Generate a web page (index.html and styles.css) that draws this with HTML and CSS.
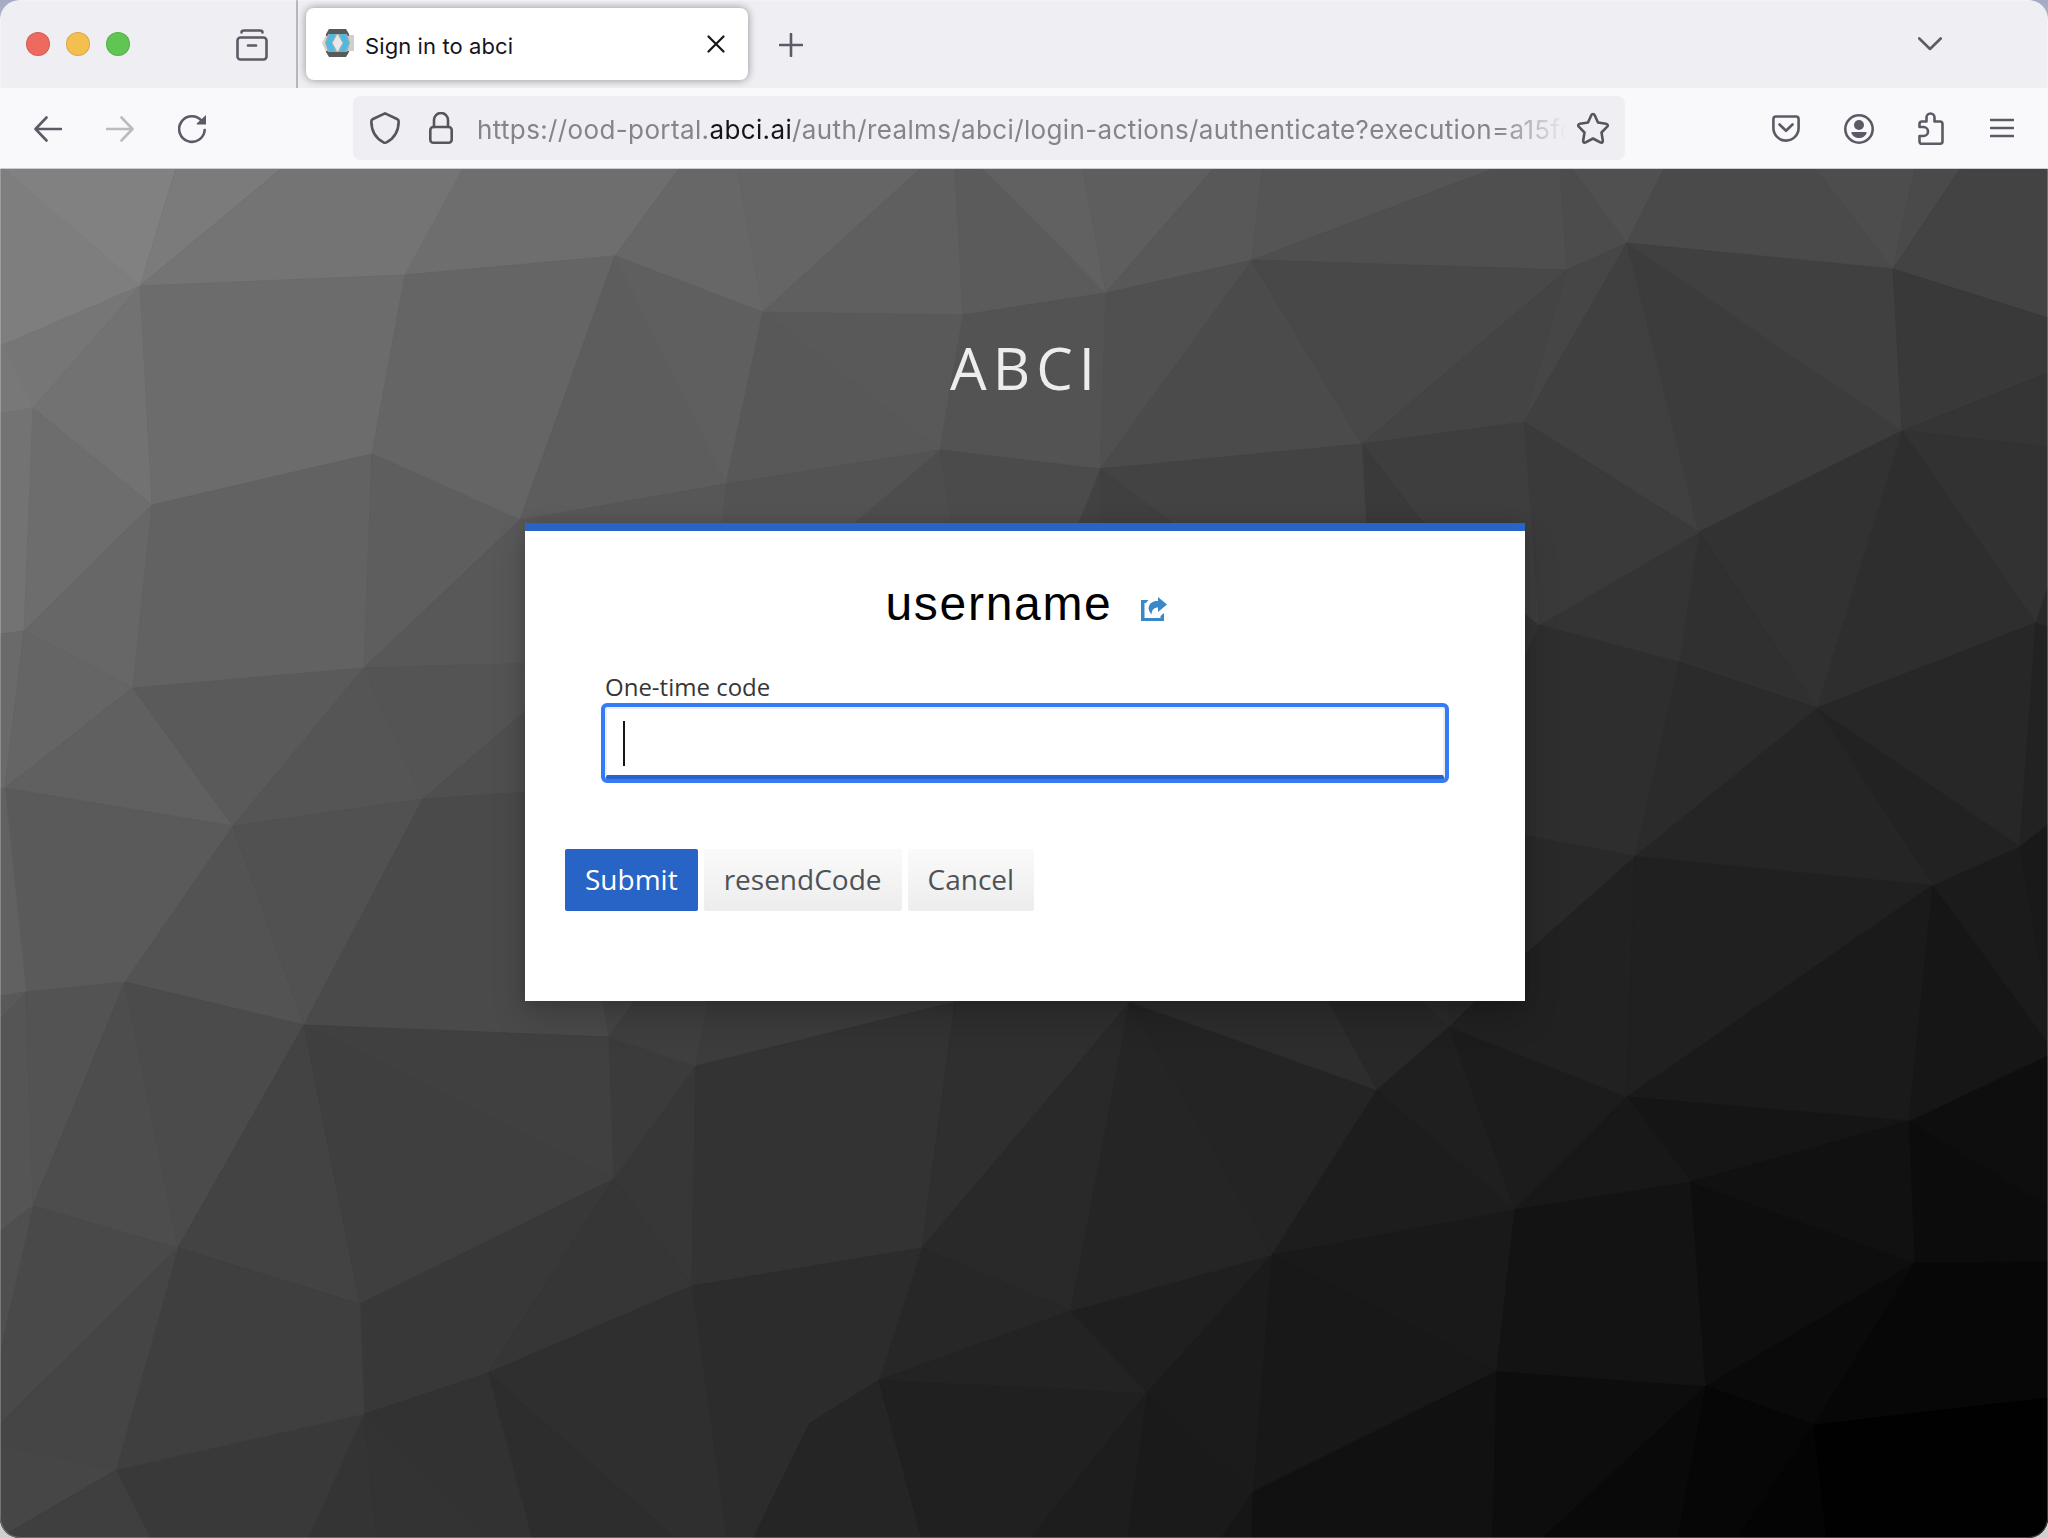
FILE: index.html
```html
<!DOCTYPE html>
<html lang="en">
<head>
<meta charset="utf-8">
<title>Sign in to abci</title>
<link rel="stylesheet" href="styles.css">
</head>
<body>
<div class="window">
  <header class="tabbar">
    <div class="lights"><span class="light red"></span><span class="light yellow"></span><span class="light green"></span></div>
    <svg class="icon view-icon" width="32" height="32" viewBox="0 0 32 32"><path d="M5.5 3.5C5.5 2 6.500 1.500 8 1.500H24C25.500 1.500 26.500 2 26.500 3.500"/><rect x="1.500" y="8.500" width="29" height="22" rx="3"/><path d="M12 16.500h8"/></svg>
    <div class="tab">
      <svg class="favicon" width="32" height="30" viewBox="0 0 32 30"><path d="M24 6h8v16h-8z" fill="#cfcfcf"/><path d="M0 14l4-8h5v17H4z" fill="#d2d4d5"/><path d="M7 0h17l3 5v2H4V5zM4 22h23v1l-3 5H7l-3-5z" fill="#595959"/><path d="M6 5h19l3 9-3 9H6l-3-9z" fill="#a3a9ab"/><path d="M15.500 5l5 9-5 9-5-9z" fill="#e6e8e9"/><path d="M8 5h5.500L9.500 14l4 9H8l-4-9z" fill="#4bbbe6"/><path d="M17.500 5H23l4 9-4 9h-5.500l4-9z" fill="#4bbbe6"/></svg>
      <span class="tab-title">Sign in to abci</span>
      <svg class="icon close" width="18" height="18" viewBox="0 0 18 18"><path d="M1.500 1.500l15 15M16.500 1.500l-15 15"/></svg>
    </div>
    <svg class="icon plus" width="24" height="24" viewBox="0 0 24 24"><path d="M12 1v22M1 12h22"/></svg>
    <svg class="icon chevron" width="24" height="14" viewBox="0 0 24 14"><path d="M1.300 1.500L12 12 22.700 1.500"/></svg>
  </header>
  <nav class="toolbar">
    <svg class="icon low" width="28" height="26" viewBox="0 0 28 26"><path d="M27 13H2M12.500 1.500L1.500 13l11 11.500"/></svg>
    <svg class="icon forward low" width="28" height="26" viewBox="0 0 28 26"><path d="M1 13h25M15.500 1.500L26.500 13l-11 11.500"/></svg>
    <svg class="icon reload low" width="28" height="30" viewBox="0 0 28 30"><path d="M23.500 6.500A12.800 12.800 0 1 0 26.700 16"/><path class="solid" d="M28 1v9.500h-8.500c-1 0-1-.8-.5-1.300z"/></svg>
    <div class="urlbar">
      <svg class="icon dark" width="30" height="32" viewBox="0 0 30 32"><path d="M15 1.300L27 7c1 .5 1.700 1.200 1.700 2.500C28.500 19 25 26 16.500 30.300q-1.500.8-3 0C5 26 1.500 19 1.300 9.500 1.300 8.200 2 7.500 3 7z"/></svg>
      <svg class="icon dark lock" width="24" height="32" viewBox="0 0 24 32"><path d="M5 15V8a7 7 0 0 1 14 0v7"/><rect x="1.300" y="15" width="21.400" height="15.700" rx="3"/></svg>
      <div class="url">https://ood-portal.<b>abci.ai</b>/auth/realms/abci/login-actions/authenticate?execution=a15fc</div>
      <svg class="icon dark" width="32" height="32" viewBox="0 0 32 32"><path d="M16 2c.8 0 1.300.4 1.600 1l3.400 7.500 8 1.200c1.800.3 2.300 1.800 1.200 3l-5.700 5.800 1.300 8c.2 1.700-1 2.600-2.500 1.900L16 26.500 8.700 30.400c-1.500.7-2.700-.2-2.500-1.900l1.300-8-5.700-5.800c-1.100-1.200-.6-2.700 1.200-3l8-1.200L14.400 3c.3-.6.8-1 1.600-1z"/></svg>
    </div>
    <div class="actions">
      <svg class="icon" width="28" height="27" viewBox="0 0 28 27"><path d="M4 1.500h20q2.600 0 2.600 2.700V13a12.600 12.600 0 0 1-25.200 0V4.200Q1.400 1.500 4 1.500zM7.500 9.500l6.500 6.300 6.500-6.300"/></svg>
      <svg class="icon low" width="30" height="30" viewBox="0 0 30 30"><circle cx="15" cy="15" r="13.700"/><circle class="solid" cx="15" cy="11" r="5"/><path class="solid" d="M8.500 18h13q1.500 0 1 1.300C21 23 18 24 15 24s-6-1-7.500-4.700Q7 18 8.500 18z"/></svg>
      <svg class="icon puzzle" width="26" height="33" viewBox="0 0 26 33"><path d="M4 9.500h4.500V5.500a4 4 0 0 1 8 0v4H22q2.500 0 2.500 2.500v17.500q0 2.200-2.500 2.200H4q-2.500 0-2.500-2.200V24h4a4.500 4.500 0 0 0 0-9H1.500v-3Q1.500 9.500 4 9.500z"/></svg>
      <svg class="icon" width="24" height="20" viewBox="0 0 24 20"><path d="M1 2h22M1 10h22M1 18h22"/></svg>
    </div>
  </nav>
  <main class="page">
    <svg class="facets" width="2048" height="1369" viewBox="0 168 2048 1369" aria-hidden="true">
      <g>
      <polygon color="#7e7e7e" points="0,160 5,169 140,285 3,344 0,344"/>
      <polygon color="#818181" points="0,160 178,160 140,285 5,169"/>
      <polygon color="#7b7b7b" points="176,168 281,168 140,285"/>
      <polygon color="#747474" points="281,168 463,168 405,274 140,285"/>
      <polygon color="#6e6e6e" points="463,168 679,168 615,255 405,274"/>
      <polygon color="#676767" points="679,168 738,168 763,311 615,255"/>
      <polygon color="#656565" points="738,168 920,168 763,311"/>
      <polygon color="#5f5f5f" points="920,168 955,168 963,314 763,311"/>
      <polygon color="#5b5b5b" points="955,168 983,168 1106,292 963,314"/>
      <polygon color="#616161" points="983,168 1083,168 1106,292"/>
      <polygon color="#5e5e5e" points="1083,168 1213,168 1106,292"/>
      <polygon color="#585858" points="1213,168 1262,168 1252,259 1106,292"/>
      <polygon color="#555555" points="1262,168 1493,168 1252,259"/>
      <polygon color="#4f4f4f" points="1493,168 1560,168 1567,269 1252,259"/>
      <polygon color="#4c4c4c" points="1560,168 1573,168 1627,242 1567,269"/>
      <polygon color="#505050" points="1573,168 1664,168 1627,242"/>
      <polygon color="#4a4a4a" points="1664,168 1816,168 1893,268 1627,242"/>
      <polygon color="#4d4d4d" points="1816,168 1915,168 1893,268"/>
      <polygon color="#4a4a4a" points="1915,168 1960,168 1893,268"/>
      <polygon color="#434343" points="1960,168 2048,168 2048,317 1893,268"/>
      </g>
      <g>
      <polygon color="#767676" points="3,344 140,285 33,407"/>
      <polygon color="#787878" points="0,344 3,344 33,407 0,413"/>
      <polygon color="#727272" points="140,285 152,504 33,407"/>
      <polygon color="#6c6c6c" points="140,285 405,274 372,453 152,504"/>
      <polygon color="#656565" points="405,274 615,255 520,519 372,453"/>
      <polygon color="#5d5d5d" points="615,255 726,483 520,519"/>
      <polygon color="#5f5f5f" points="615,255 763,311 726,483"/>
      <polygon color="#585858" points="763,311 940,449 726,483"/>
      <polygon color="#595959" points="763,311 963,314 940,449"/>
      <polygon color="#535353" points="963,314 1106,292 1100,468 940,449"/>
      <polygon color="#505050" points="1106,292 1252,259 1100,468"/>
      <polygon color="#4b4b4b" points="1252,259 1362,443 1100,468"/>
      <polygon color="#484848" points="1252,259 1567,269 1362,443"/>
      <polygon color="#444444" points="1567,269 1524,421 1362,443"/>
      <polygon color="#464646" points="1567,269 1627,242 1524,421"/>
      <polygon color="#404040" points="1627,242 1699,531 1524,421"/>
      <polygon color="#3c3c3c" points="1627,242 1902,430 1699,531"/>
      <polygon color="#404040" points="1627,242 1893,268 1902,430"/>
      <polygon color="#393939" points="1893,268 2048,317 2048,372 1902,430"/>
      <polygon color="#353535" points="1902,430 2048,372 2048,446"/>
      <polygon color="#323232" points="1902,430 2048,446 2048,587 2036,622"/>
      <polygon color="#2e2e2e" points="1902,430 2036,622 1817,707"/>
      <polygon color="#323232" points="1902,430 1817,707 1699,531"/>
      <polygon color="#303030" points="1699,531 1817,707 1679,661"/>
      <polygon color="#343434" points="1699,531 1679,661 1539,624"/>
      <polygon color="#3a3a3a" points="1524,421 1699,531 1539,624"/>
      <polygon color="#3e3e3e" points="1524,421 1539,624 1437,540 1362,443"/>
      <polygon color="#3a3a3a" points="1362,443 1437,540 1367,540"/>
      <polygon color="#434343" points="1100,468 1362,443 1367,540 1196,540"/>
      <polygon color="#404040" points="1100,468 1196,540 1102,540"/>
      <polygon color="#424242" points="1100,468 1102,540 1071,540"/>
      <polygon color="#4b4b4b" points="940,449 1100,468 1071,540 954,540"/>
      <polygon color="#4d4d4d" points="940,449 954,540 833,540"/>
      <polygon color="#535353" points="726,483 940,449 833,540 720,540"/>
      <polygon color="#575757" points="520,519 726,483 720,540 520,540"/>
      </g>
      <g>
      <polygon color="#737373" points="0,413 33,407 24,630 0,633"/>
      <polygon color="#6d6d6d" points="33,407 152,504 24,630"/>
      <polygon color="#676767" points="152,504 133,687 24,630"/>
      <polygon color="#626262" points="152,504 372,453 364,667 133,687"/>
      <polygon color="#5e5e5e" points="372,453 520,519 364,667"/>
      <polygon color="#585858" points="520,519 540,519 540,662 364,667"/>
      <polygon color="#545454" points="364,667 540,662 540,698 423,798"/>
      <polygon color="#4f4f4f" points="423,798 540,698 540,793"/>
      <polygon color="#6a6a6a" points="0,633 24,630 5,787 0,787"/>
      <polygon color="#656565" points="24,630 133,687 5,787"/>
      <polygon color="#606060" points="133,687 233,825 5,787"/>
      <polygon color="#5a5a5a" points="133,687 364,667 233,825"/>
      <polygon color="#555555" points="364,667 423,798 233,825"/>
      <polygon color="#5a5a5a" points="5,787 233,825 125,981 26,991"/>
      <polygon color="#616161" points="0,787 5,787 26,991 0,995"/>
      <polygon color="#535353" points="233,825 304,1024 125,981"/>
      <polygon color="#515151" points="233,825 423,798 304,1024"/>
      <polygon color="#4a4a4a" points="423,798 540,790 600,980 609,1036 304,1024"/>
      <polygon color="#595959" points="0,995 26,991 0,1017"/>
      <polygon color="#555555" points="0,1017 26,991 33,1205 0,1230"/>
      <polygon color="#535353" points="26,991 125,981 33,1205"/>
      <polygon color="#4d4d4d" points="125,981 178,1247 33,1205"/>
      <polygon color="#4b4b4b" points="125,981 304,1024 178,1247"/>
      <polygon color="#434343" points="304,1024 360,1303 178,1247"/>
      <polygon color="#3f3f3f" points="304,1024 614,1178 360,1303"/>
      <polygon color="#404040" points="304,1024 609,1036 614,1178"/>
      <polygon color="#3b3b3b" points="609,1036 696,1065 614,1178"/>
      <polygon color="#454545" points="609,1036 600,980 649,980"/>
      <polygon color="#3f3f3f" points="609,1036 649,980 713,980 696,1065"/>
      <polygon color="#3c3c3c" points="696,1065 713,980 1010,980 955,1001"/>
      <polygon color="#373737" points="614,1178 696,1065 692,1285"/>
      <polygon color="#333333" points="696,1065 955,1001 922,1247 692,1285"/>
      <polygon color="#2f2f2f" points="955,1001 957,980 1140,980 1130,1001 922,1247"/>
      <polygon color="#292929" points="922,1247 1130,1001 1071,1310"/>
      <polygon color="#272727" points="922,1247 1071,1310 879,1379"/>
      <polygon color="#383838" points="360,1303 614,1178 488,1372 364,1413"/>
      <polygon color="#363636" points="614,1178 692,1285 488,1372"/>
      <polygon color="#2c2c2c" points="692,1285 922,1247 879,1379 810,1422 753,1538 727,1538"/>
      <polygon color="#2f2f2f" points="692,1285 727,1538 676,1538 488,1372"/>
      <polygon color="#2d2d2d" points="488,1372 676,1538 532,1538"/>
      <polygon color="#323232" points="364,1413 488,1372 532,1538 487,1538"/>
      <polygon color="#333333" points="364,1413 487,1538 377,1538"/>
      <polygon color="#343434" points="364,1413 377,1538 308,1538"/>
      <polygon color="#393939" points="116,1469 364,1413 308,1538 151,1538"/>
      <polygon color="#3f3f3f" points="178,1247 360,1303 364,1413 116,1469"/>
      <polygon color="#494949" points="33,1205 178,1247 0,1423 0,1350"/>
      <polygon color="#4f4f4f" points="0,1230 33,1205 0,1350"/>
      <polygon color="#454545" points="178,1247 116,1469 0,1444 0,1423"/>
      <polygon color="#464646" points="0,1444 116,1469 5,1534 0,1538"/>
      <polygon color="#3f3f3f" points="116,1469 151,1538 0,1538 5,1534"/>
      <polygon color="#252525" points="810,1422 879,1379 922,1538 753,1538"/>
      <polygon color="#202020" points="879,1379 1147,1392 1030,1538 922,1538"/>
      <polygon color="#232323" points="879,1379 1071,1310 1147,1392"/>
      </g>
      <g>
      <polygon color="#1f1f1f" points="1071,1310 1272,1254 1147,1392"/>
      <polygon color="#252525" points="1130,1001 1272,1254 1071,1310"/>
      <polygon color="#242424" points="1130,1001 1377,1089 1272,1254"/>
      <polygon color="#2d2d2d" points="1130,1001 1140,980 1318,980 1377,1089"/>
      <polygon color="#282828" points="1377,1089 1318,980 1401,980 1449,1026"/>
      <polygon color="#2b2b2b" points="1449,1026 1401,980 1448,980"/>
      <polygon color="#292929" points="1449,1026 1448,980 1500,980"/>
      <polygon color="#1f1f1f" points="1449,1026 1377,1089 1515,1209"/>
      <polygon color="#1d1d1d" points="1377,1089 1515,1209 1272,1254"/>
      <polygon color="#1c1c1c" points="1449,1026 1627,1096 1515,1209"/>
      <polygon color="#212121" points="1449,1026 1525,953 1635,855 1627,1096"/>
      <polygon color="#202020" points="1635,855 1933,884 1627,1096"/>
      <polygon color="#1a1a1a" points="1933,884 1909,1120 1627,1096"/>
      <polygon color="#151515" points="1627,1096 1909,1120 1691,1181"/>
      <polygon color="#181818" points="1627,1096 1691,1181 1515,1209"/>
      <polygon color="#191919" points="1272,1254 1515,1209 1497,1370"/>
      <polygon color="#181818" points="1272,1254 1497,1370 1253,1491"/>
      <polygon color="#1b1b1b" points="1272,1254 1253,1491 1147,1392"/>
      <polygon color="#1a1a1a" points="1147,1392 1253,1491 1220,1538 1127,1538"/>
      <polygon color="#1d1d1d" points="1147,1392 1127,1538 1030,1538"/>
      <polygon color="#161616" points="1253,1491 1252,1538 1220,1538"/>
      <polygon color="#111111" points="1253,1491 1497,1370 1493,1538 1252,1538"/>
      <polygon color="#0d0d0d" points="1497,1370 1706,1385 1542,1538 1493,1538"/>
      <polygon color="#131313" points="1515,1209 1691,1181 1706,1385 1497,1370"/>
      <polygon color="#0e0e0e" points="1691,1181 1915,1262 1706,1385"/>
      <polygon color="#111111" points="1691,1181 1909,1120 1915,1262"/>
      <polygon color="#0c0c0c" points="1909,1120 2048,1205 2048,1261 1915,1262"/>
      <polygon color="#0e0e0e" points="1909,1120 2048,1054 2048,1205"/>
      <polygon color="#161616" points="1933,884 2048,1042 2048,1054 1909,1120"/>
      <polygon color="#1b1b1b" points="1933,884 2020,845 2048,1006 2048,1042"/>
      <polygon color="#191919" points="2020,845 2048,823 2048,1006"/>
      <polygon color="#222222" points="1817,707 2020,845 1933,884"/>
      <polygon color="#252525" points="1817,707 1933,884 1635,855"/>
      <polygon color="#272727" points="1817,707 2036,622 2020,845"/>
      <polygon color="#222222" points="2036,622 2048,625 2048,823 2020,845"/>
      <polygon color="#2a2a2a" points="2036,622 2048,587 2048,625"/>
      <polygon color="#2b2b2b" points="1679,661 1817,707 1635,855"/>
      <polygon color="#2e2e2e" points="1539,624 1679,661 1635,855 1510,832 1510,690"/>
      <polygon color="#292929" points="1510,832 1635,855 1510,966"/>
      <polygon color="#0a0a0a" points="1915,1262 1814,1424 1706,1385"/>
      <polygon color="#070707" points="1915,1262 2048,1261 2048,1397 1814,1424"/>
      <polygon color="#090909" points="1706,1385 1678,1538 1542,1538"/>
      <polygon color="#060606" points="1706,1385 1814,1424 1737,1538 1678,1538"/>
      <polygon color="#040404" points="1814,1424 1827,1538 1737,1538"/>
      <polygon color="#010101" points="1814,1424 2048,1397 2048,1538 1827,1538"/>
      </g>
    </svg>
    <h1 class="realm">ABCI</h1>
    <section class="card">
      <div class="user"><span class="username">username</span>
        <svg class="share" width="26" height="24" viewBox="0 0 26 24"><path d="M7.500 3H0v21h23v-8l-3.500 3v2H3.500V6H5z"/><path d="M17 0l9 7.500-9 7.500v-4.500c-4 0-6 2-6.500 7C8 14.500 7 12 8 9s4-5 9-5z"/></svg>
      </div>
      <form class="form">
        <label class="label">One-time code</label>
        <div class="field"><span class="caret"></span></div>
      </form>
      <div class="buttons"><span class="btn primary">Submit</span><span class="btn">resendCode</span><span class="btn">Cancel</span></div>
    </section>
  </main>
</div>
</body>
</html>
```

FILE: styles.css
```css
* { box-sizing: border-box; }
body { margin: 0; width: 2048px; height: 1538px; overflow: hidden; background: linear-gradient(#a3abc4, #d0d0d0 60px); }
.window { position: relative; width: 2048px; height: 1538px; border-radius: 20px; overflow: hidden; display: flex; flex-direction: column; font-family: Inter, "Noto Sans", sans-serif; }
.window::after { content: ""; position: absolute; inset: 0; border-radius: 20px; box-shadow: inset 0 0 0 1px rgba(255,255,255,.25); }
svg { display: block; flex: none; }
.icon { fill: none; stroke: #5b5b66; stroke-width: 2.6; stroke-linecap: round; stroke-linejoin: round; }
.icon .solid { fill: #5b5b66; stroke: none; }
.icon.dark { stroke: #55555b; }
.low { margin-top: 2px; }

.tabbar { height: 88px; flex: none; background: #efeef3; display: flex; align-items: center; padding-left: 26px; }
.lights { display: flex; gap: 16px; }
.light { width: 24px; height: 24px; border-radius: 50%; border: 1px solid rgba(0,0,0,.12); }
.red { background: #ed6a5e; }
.yellow { background: #f5bf4f; }
.green { background: #61c554; }
.view-icon { margin-left: 106px; margin-top: 1px; }
.tab { height: 72px; width: 442px; margin-left: 38px; background: #fff; border-radius: 8px; box-shadow: 0 0 8px rgba(0,0,0,.4); display: flex; align-items: center; padding: 0 23px 0 16px; position: relative; }
.tab::before { content: ""; position: absolute; left: -10px; top: -8px; width: 2px; height: 88px; background: #b6b6bb; }
.tab-title { font-size: 22px; color: #15141a; margin-left: 11px; letter-spacing: .1px; line-height: 28px; padding-top: 4px; flex: 1; }
.close { stroke: #15141a; stroke-width: 2.2; }
.plus { margin: 2px 0 0 31px; stroke-width: 2.6; }
.chevron { margin-left: auto; margin-right: 106px; }

.toolbar { height: 81px; flex: none; background: #f9f9fb; border-bottom: 1px solid #cccccf; display: flex; align-items: center; padding: 0 34px 0 34px; }
.forward { margin-left: 44px; stroke: #bbbbc0; }
.reload { margin-left: 44px; }
.urlbar { margin-left: 147px; width: 1272px; height: 64px; border-radius: 8px; background: #efeef3; display: flex; align-items: center; padding: 0 16px 0 17px; }
.lock { margin-left: 29px; }
.url { margin-left: 24px; padding-top: 3px; width: 1090px; margin-right: 10px; overflow: hidden; white-space: nowrap; font-size: 26px; line-height: 40px; letter-spacing: .37px; color: #84848a; -webkit-mask-image: linear-gradient(90deg, #000 1020px, transparent 1090px); mask-image: linear-gradient(90deg, #000 1020px, transparent 1090px); }
.url b { font-weight: 400; color: #15141a; }
.actions { margin-left: auto; display: flex; align-items: center; gap: 44px; }
.puzzle { margin-right: 2px; }

.page { position: relative; flex: 1; background: #333; display: flex; flex-direction: column; align-items: center; }
.facets { position: absolute; left: 0; top: 0; }
.facets polygon { fill: currentColor; stroke: currentColor; stroke-width: .8; }
.realm { position: relative; margin: 159px 0 0 3px; font: 450 58px/80px "Open Sans", sans-serif; letter-spacing: 6px; color: #ededed; }
.card { position: relative; width: 1000px; height: 478px; margin-top: 115px; margin-left: 2px; background: #fff; border-top: 8px solid #2864c6; box-shadow: 0 16px 32px rgba(3,3,3,.18), 0 0 12px rgba(3,3,3,.12); padding: 40px 40px 0; display: flex; flex-direction: column; }
.user { display: flex; justify-content: center; align-items: center; height: 66px; padding-left: 2px; }
.username { font: 400 48px/66px "Liberation Sans", Arial, sans-serif; letter-spacing: 1.7px; color: #000; }
.share { fill: #3a87c9; margin: 10px 0 0 28px; }
.form { margin: 32px 40px 0; display: flex; flex-direction: column; }
.label { font: 450 24px/36px "Open Sans", sans-serif; color: #363636; height: 38px; }
.field { height: 72px; border: 2px solid #ededed; border-bottom: 4px solid #2864c6; outline: 4px solid #357af6; border-radius: 2px; padding: 12px 16px; display: flex; }
.caret { width: 2px; height: 45px; background: #151515; }
.buttons { display: flex; gap: 6px; margin-top: 70px; }
.btn { height: 62px; padding: 0 20px; border-radius: 2px; font: 450 28px/61px "Open Sans", sans-serif; color: #4d5258; background: linear-gradient(#fafafa, #ededed); }
.primary { background: #2864c6; color: #fff; }
```
